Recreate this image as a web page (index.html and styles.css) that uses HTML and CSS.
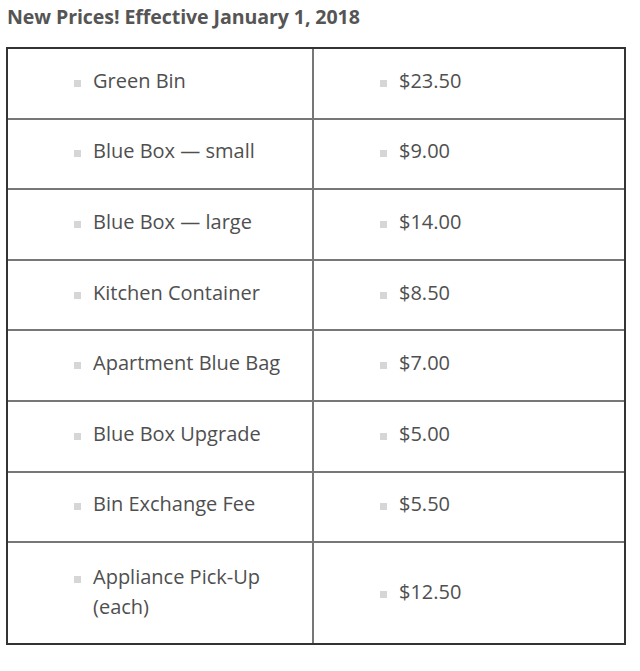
FILE: index.html
```html
<!DOCTYPE html>
<html>
<head>
<meta charset="utf-8">
<link rel="stylesheet" href="styles.css">
</head>
<body>
<h2 class="title">New Prices! Effective January 1, 2018</h2>
<table class="prices">
  <tr><td><ul class="item"><li>Green Bin</li></ul></td><td><ul class="item"><li>$23.50</li></ul></td></tr>
  <tr><td><ul class="item"><li>Blue Box — small</li></ul></td><td><ul class="item"><li>$9.00</li></ul></td></tr>
  <tr><td><ul class="item"><li>Blue Box — large</li></ul></td><td><ul class="item"><li>$14.00</li></ul></td></tr>
  <tr><td><ul class="item"><li>Kitchen Container</li></ul></td><td><ul class="item"><li>$8.50</li></ul></td></tr>
  <tr><td><ul class="item"><li>Apartment Blue Bag</li></ul></td><td><ul class="item"><li>$7.00</li></ul></td></tr>
  <tr><td><ul class="item"><li>Blue Box Upgrade</li></ul></td><td><ul class="item"><li>$5.00</li></ul></td></tr>
  <tr><td><ul class="item"><li>Bin Exchange Fee</li></ul></td><td><ul class="item"><li>$5.50</li></ul></td></tr>
  <tr class="tall"><td><ul class="item"><li>Appliance Pick-Up (each)</li></ul></td><td><ul class="item"><li>$12.50</li></ul></td></tr>
</table>
</body>
</html>
```
FILE: styles.css
```css
html, body {
  margin: 0;
  padding: 0;
  background: #fff;
}
body {
  font-family: "Open Sans", "Liberation Sans", sans-serif;
  color: #4f4f4f;
}
.title {
  margin: 0;
  padding: 4px 0 0 7px;
  font-size: 19.6px;
  line-height: 26px;
  font-weight: 700;
  letter-spacing: -0.1px;
  color: #555;
  height: 47px;
  box-sizing: border-box;
}
.prices {
  margin-left: 6px;
  width: 620px;
  border: 2px solid #333;
  border-spacing: 0;
  border-collapse: separate;
  table-layout: fixed;
}
.prices td {
  height: 70.6px;
  padding: 0 10px 0 0;
  border-right: 2px solid #777;
  border-bottom: 2px solid #777;
  vertical-align: middle;
  box-sizing: border-box;
}
.prices td:first-child {
  width: 306px;
}
.prices td:last-child {
  border-right: none;
}
.prices tr:last-child td {
  border-bottom: none;
  height: 99.5px;
}
.item {
  list-style: none;
  margin: 0;
  padding: 0 0 5px 85px;
  font-size: 20px;
  line-height: 30px;
}
.prices tr:last-child .item {
  padding-bottom: 2px;
}
.item li {
  position: relative;
}
.item li::before {
  content: "";
  position: absolute;
  left: -19px;
  top: 14px;
  width: 7px;
  height: 7px;
  background: #d6d6d6;
}
```
